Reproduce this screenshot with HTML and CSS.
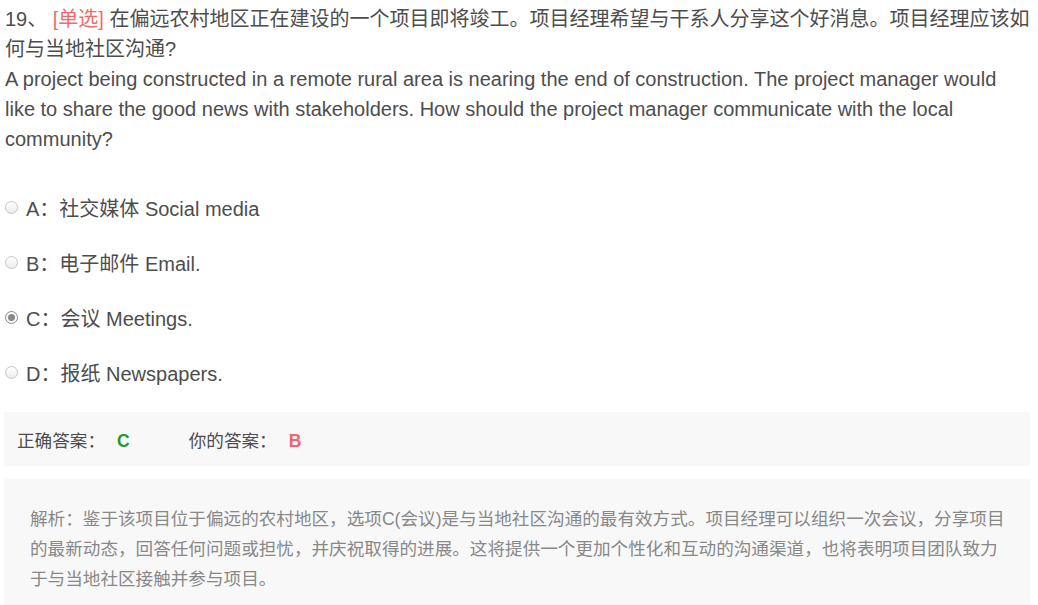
FILE: index.html
```html
<!DOCTYPE html>
<html lang="zh-CN">
<head>
<meta charset="utf-8">
<title>Question 19</title>
<link rel="stylesheet" href="styles.css">
</head>
<body>
<div class="page">
  <div class="question">
    <div class="stem">19、 <span class="type">[单选]</span> 在偏远农村地区正在建设的一个项目即将竣工。项目经理希望与干系人分享这个好消息。项目经理应该如何与当地社区沟通?</div>
    <div class="stem-en">A project being constructed in a remote rural area is nearing the end of construction. The project manager would like to share the good news with stakeholders. How should the project manager communicate with the local community?</div>
  </div>
  <div class="options">
    <div class="option"><span class="radio"></span><span class="label">A：社交媒体 Social media</span></div>
    <div class="option"><span class="radio"></span><span class="label">B：电子邮件 Email.</span></div>
    <div class="option"><span class="radio checked"></span><span class="label">C：会议 Meetings.</span></div>
    <div class="option"><span class="radio"></span><span class="label">D：报纸 Newspapers.</span></div>
  </div>
  <div class="answer-box">
    <span class="ans-group">正确答案：<b class="correct">C</b></span>
    <span class="ans-group second">你的答案：<b class="wrong">B</b></span>
  </div>
  <div class="analysis">解析：鉴于该项目位于偏远的农村地区，选项C(会议)是与当地社区沟通的最有效方式。项目经理可以组织一次会议，分享项目的最新动态，回答任何问题或担忧，并庆祝取得的进展。这将提供一个更加个性化和互动的沟通渠道，也将表明项目团队致力于与当地社区接触并参与项目。</div>
</div>
</body>
</html>
```

FILE: styles.css
```css
html, body {
  margin: 0;
  padding: 0;
  background: #ffffff;
}

body {
  font-family: "Liberation Sans", Arial, "Noto Sans CJK SC", sans-serif;
  color: #4d4d4d;
}

.page {
  width: 1026px;
  padding: 4px 0 0 4px;
}

.question {
  font-size: 20px;
  line-height: 30px;
  padding-left: 1px;
  padding-right: 0.5px;
}

.type {
  color: #f06b6b;
}

.options {
  display: flex;
  flex-direction: column;
  gap: 25px;
  margin-top: 38px;
}

.option {
  display: flex;
  align-items: center;
  height: 30px;
  font-size: 20px;
}

.radio {
  box-sizing: border-box;
  width: 13px;
  height: 13px;
  border-radius: 50%;
  border: 1px solid #c6c6c6;
  background: linear-gradient(#ffffff, #ececec);
  margin: 0 8px 0 1px;
  position: relative;
  flex: none;
}

.radio.checked {
  border-color: #8a8a8a;
  background: #fff;
}

.radio.checked::after {
  content: "";
  position: absolute;
  left: 2px;
  top: 2px;
  width: 7px;
  height: 7px;
  border-radius: 50%;
  background: #8a8a8a;
}

.answer-box {
  margin-top: 25px;
  background: #f8f8f8;
  height: 54px;
  display: flex;
  align-items: center;
  padding-left: 13px;
  font-size: 17.6px;
  color: #4d4d4d;
}

.ans-group b {
  margin-left: 12px;
  font-weight: bold;
}

.ans-group.second {
  margin-left: 59px;
}

.correct {
  color: #1e9a2a;
}

.wrong {
  color: #f0646a;
}

.analysis {
  margin-top: 13px;
  background: #f8f8f8;
  padding: 25px 20px 20px 26px;
  font-size: 17.6px;
  line-height: 30px;
  color: #888888;
}
```
